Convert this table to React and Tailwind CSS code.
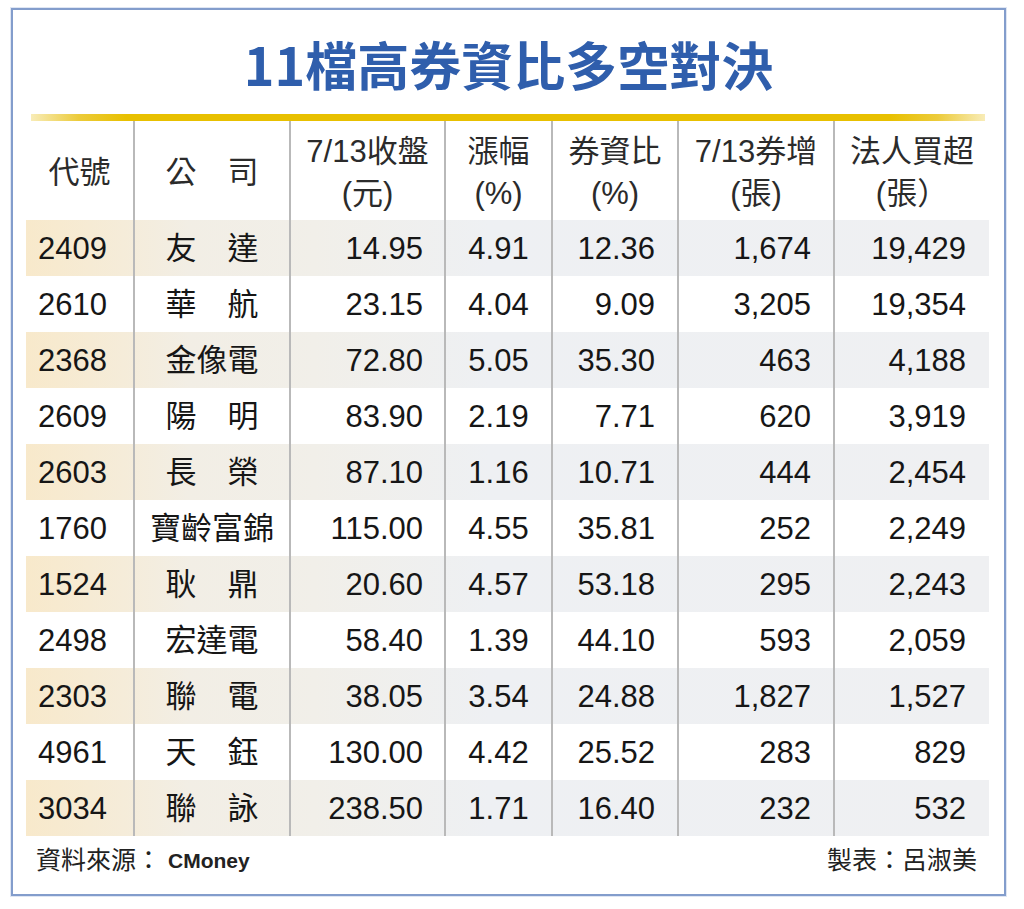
import React from 'react';

const headers = [
  { lines: ['代號'] },
  { lines: ['公　司'] },
  { lines: ['7/13收盤', '(元)'] },
  { lines: ['漲幅', '(%)'] },
  { lines: ['券資比', '(%)'] },
  { lines: ['7/13券增', '(張)'] },
  { lines: ['法人買超', '(張）'] },
];

const rows = [
  ['2409', '友　達', '14.95', '4.91', '12.36', '1,674', '19,429'],
  ['2610', '華　航', '23.15', '4.04', '9.09', '3,205', '19,354'],
  ['2368', '金像電', '72.80', '5.05', '35.30', '463', '4,188'],
  ['2609', '陽　明', '83.90', '2.19', '7.71', '620', '3,919'],
  ['2603', '長　榮', '87.10', '1.16', '10.71', '444', '2,454'],
  ['1760', '寶齡富錦', '115.00', '4.55', '35.81', '252', '2,249'],
  ['1524', '耿　鼎', '20.60', '4.57', '53.18', '295', '2,243'],
  ['2498', '宏達電', '58.40', '1.39', '44.10', '593', '2,059'],
  ['2303', '聯　電', '38.05', '3.54', '24.88', '1,827', '1,527'],
  ['4961', '天　鈺', '130.00', '4.42', '25.52', '283', '829'],
  ['3034', '聯　詠', '238.50', '1.71', '16.40', '232', '532'],
];

// alignment per column in the data rows
const cellAlign = [
  'justify-start pl-[12px]',
  'justify-center',
  'justify-end pr-[21px]',
  'justify-center',
  'justify-end pr-[22px]',
  'justify-end pr-[22px]',
  'justify-end pr-[23px]',
];

const sep = 'border-l-2 border-[#b9b9b9]';

export default function App() {
  return (
    <div className="w-[1024px] h-[909px] bg-white pt-[8px] pl-[11px] font-['Liberation_Sans','Noto_Sans_CJK_TC',sans-serif]">
      <div className="w-[995px] h-[888px] border-2 border-[#839dcc] shadow-[0_0_0_1px_#dfe6f3] flex flex-col">
        {/* Title */}
        <h1 className="pt-[28px] text-center text-[52px] leading-[52px] font-bold text-[#2f5eac] font-['Noto_Sans_CJK_TC',sans-serif]">
          11檔高券資比多空對決
        </h1>

        {/* Gold rule */}
        <div className="mt-[24px] ml-[18px] mr-[19px] h-[7px] bg-[linear-gradient(90deg,#f8ecb8_0%,#eccb3a_5%,#e8c000_10%,#e8c000_90%,#eccb3a_95%,#f8ecb8_100%)]" />

        {/* Table */}
        <div className="ml-[13px] mr-[14px] grid grid-cols-[107px_156px_155px_107px_126px_156px_156px]">
          {headers.map((h, i) => (
            <div
              key={i}
              className={`h-[99px] pt-[5px] flex flex-col items-center justify-center text-[31px] leading-[42px] text-[#2b2b2b] ${i > 0 ? sep : ''}`}
            >
              {h.lines.map((l, j) => (
                <span key={j} className="whitespace-nowrap">{l}</span>
              ))}
            </div>
          ))}

          {rows.map((r, ri) => (
            <div
              key={ri}
              className={`col-span-7 grid grid-cols-subgrid h-[56px] ${ri % 2 === 0 ? 'bg-[linear-gradient(90deg,#f8e9cb_0%,#f5ecd9_10%,#f2eee5_17%,#f1efe9_30%,#eef0f3_48%,#eff0f2_100%)]' : 'bg-white'}`}
            >
              {r.map((c, ci) => (
                <div
                  key={ci}
                  className={`flex items-center text-[31px] leading-none text-[#161616] whitespace-nowrap ${cellAlign[ci]} ${ci > 0 ? sep : ''}`}
                >
                  {c}
                </div>
              ))}
            </div>
          ))}
        </div>

        {/* Footer */}
        <div className="mt-[12px] ml-[13px] mr-[14px] pl-[10px] pr-[13px] flex justify-between items-center h-[25px] text-[25px] leading-none text-[#222]">
          <span className="flex items-center">
            資料來源：<span className="text-[21px] font-bold ml-[7px]">CMoney</span>
          </span>
          <span>製表：呂淑美</span>
        </div>
      </div>
    </div>
  );
}
